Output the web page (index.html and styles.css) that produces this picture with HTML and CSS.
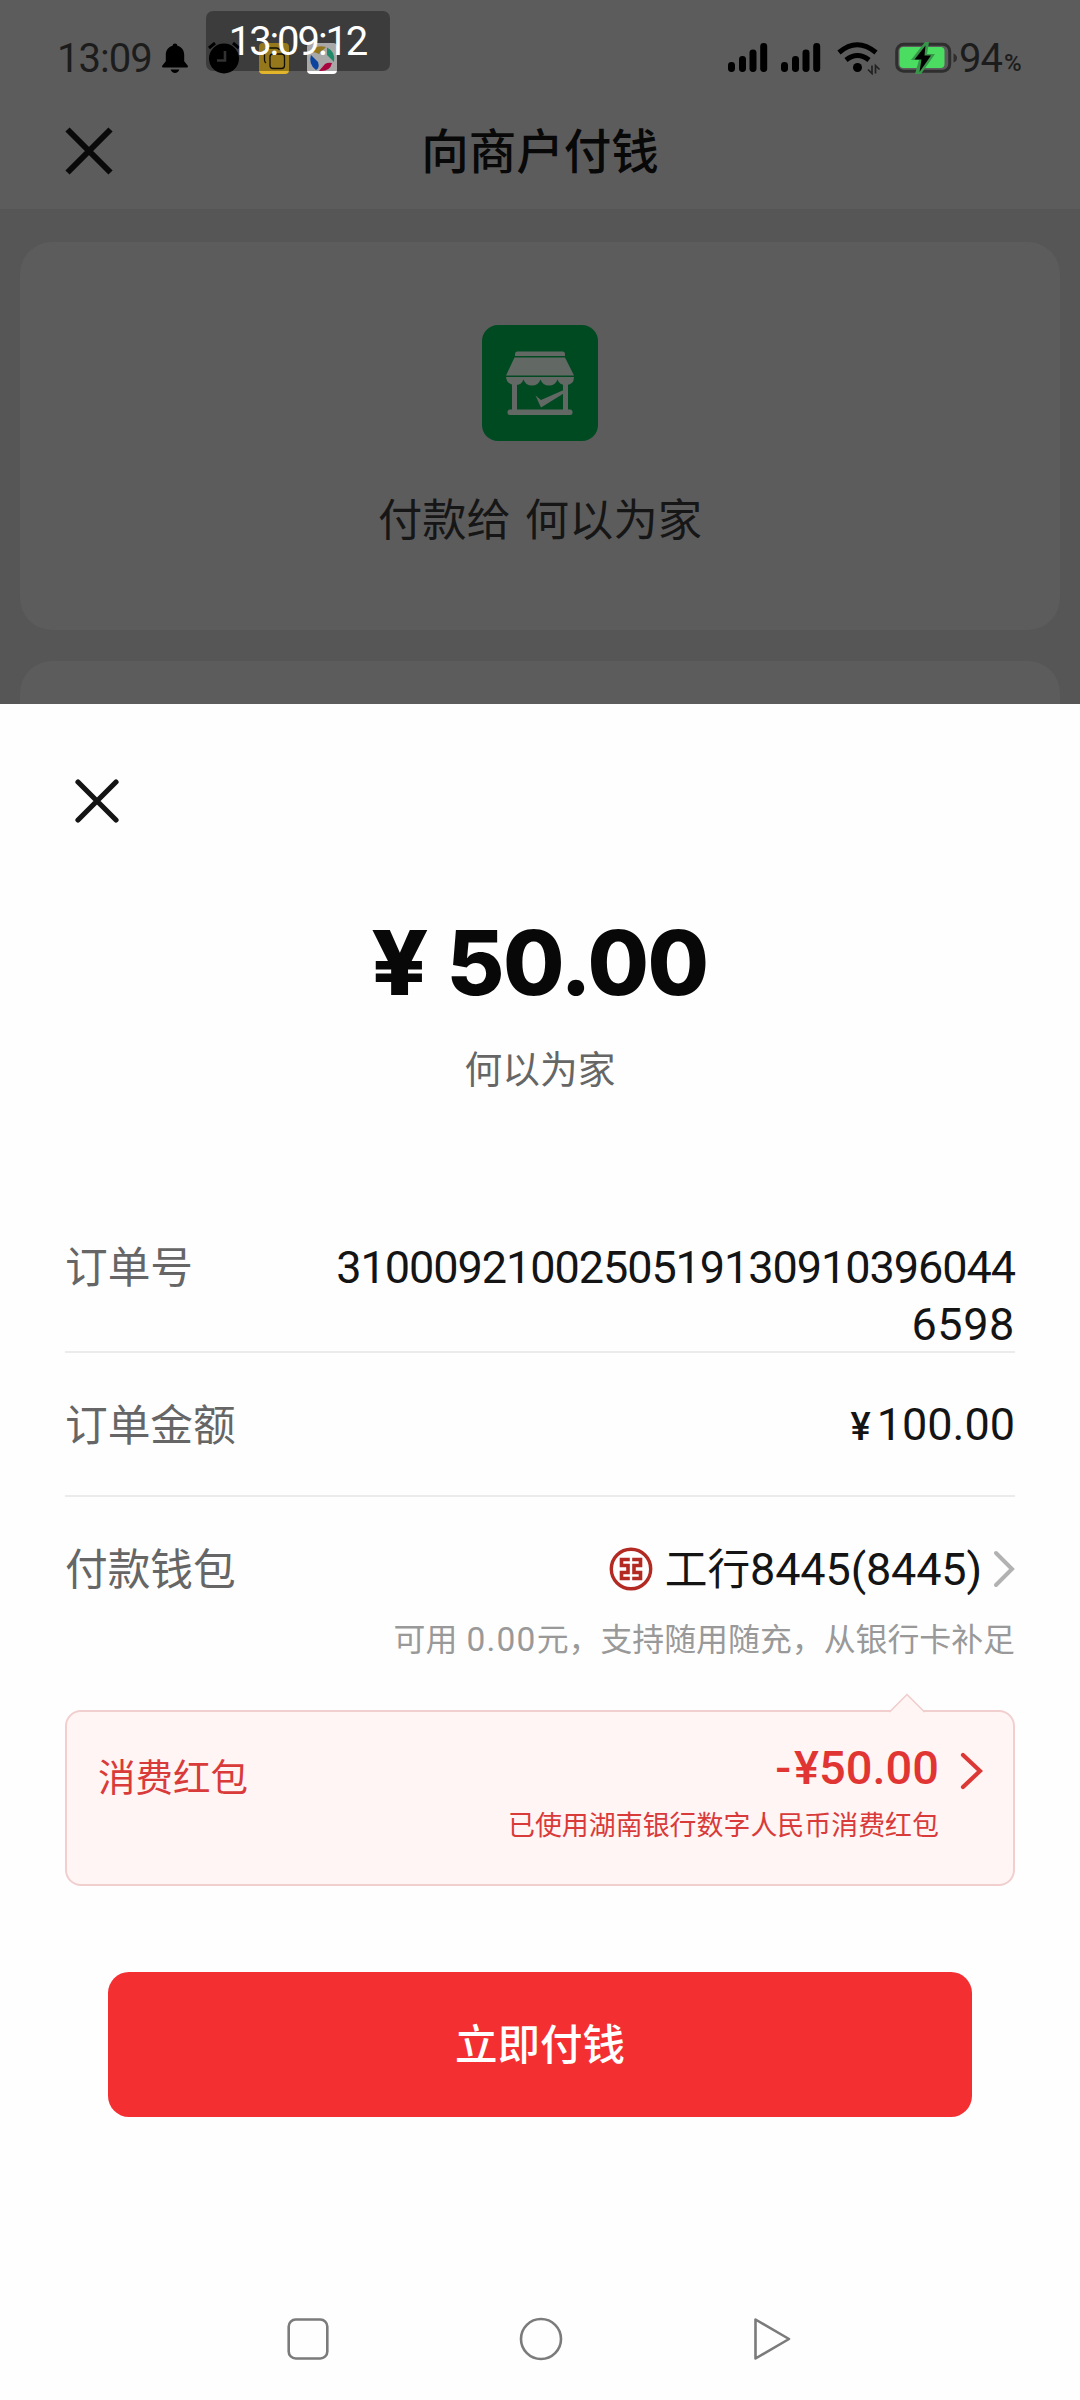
FILE: index.html
```html
<!DOCTYPE html>
<html lang="zh-CN">
<head>
<meta charset="utf-8">
<title>向商户付钱</title>
<link rel="stylesheet" href="styles.css">
</head>
<body>
<div class="screen">
  <div class="page">
    <div class="status">
      <span class="time">13:09</span>
      <svg class="bell" width="28" height="32" viewBox="0 0 28 32"><path d="M14 1.500c1.400 0 2.200.8 2.400 2.200 4.300 1 6.800 4.600 6.800 9.200v6.300l3.600 4.600c.4.600.2 1.600-.8 1.600H2c-1 0-1.200-1-.8-1.600l3.600-4.600v-6.300c0-4.600 2.500-8.200 6.800-9.200.2-1.400 1-2.200 2.400-2.200zM9.700 27.500h8.600c-.6 2.200-2.300 3.500-4.300 3.500s-3.700-1.300-4.300-3.500z"/></svg>
      <svg class="alarm" width="32" height="32" viewBox="0 0 32 32"><circle cx="16" cy="16.500" r="15"/><path d="M1 6l6-5M31 6l-6-5" stroke="#000" stroke-width="3"/><path d="M17 9v9.500H9" fill="none" stroke="#4c4c4c" stroke-width="2.600"/></svg>
      <svg class="app-a" width="30" height="31" viewBox="0 0 30 31"><rect width="30" height="31" rx="4" fill="#e3b52b"/><path d="M7 20q-1.500-1-1.500-3V9q0-4 4-4h8q2 0 3 2" fill="none" stroke="#1a1708" stroke-width="1.300"/><rect x="11" y="11" width="14.500" height="14.500" rx="3" fill="none" stroke="#1a1708" stroke-width="1.300"/></svg>
      <svg class="app-b" width="30" height="31" viewBox="0 0 30 31"><rect width="30" height="31" rx="4" fill="#fff"/><path d="M5 9Q9 1 19 4L12 11Q8 9 5 9z" fill="#e0b530"/><path d="M20 4.500Q29 9 27 19L20 12z" fill="#2fd0a0"/><path d="M25 20Q23 29 12 28L18 21Q21 19 25 20z" fill="#ff0860"/><path d="M4 12Q1 21 9 27Q13 25 11 19z" fill="#1068f0"/></svg>
      <span class="grow"></span>
      <svg class="signal" width="40" height="30" viewBox="0 0 40 30"><rect y="19" width="7" height="10" rx="3.400"/><rect x="11" y="13" width="7" height="16" rx="3.400"/><rect x="21.500" y="6.500" width="7" height="22.500" rx="3.400"/><rect x="32.200" width="7" height="29" rx="3.400"/></svg>
      <svg class="signal second" width="40" height="30" viewBox="0 0 40 30"><rect y="19" width="7" height="10" rx="3.400"/><rect x="11" y="13" width="7" height="16" rx="3.400"/><rect x="21.500" y="6.500" width="7" height="22.500" rx="3.400"/><rect x="32.200" width="7" height="29" rx="3.400"/></svg>
      <svg class="wifi" width="44" height="33" viewBox="0 0 44 33"><path d="M2 10.500Q20 -5 39 10.500M9 18Q20.500 9 32 18" fill="none" stroke="#000" stroke-width="5"/><circle cx="20.500" cy="25.500" r="4.500"/><path d="M35 23.500v8l-4-4M38.500 31.500v-8l4 4" fill="none" stroke="#222" stroke-width="1.700"/></svg>
      <svg class="battery" width="64" height="32" viewBox="0 0 64 32"><rect x="1.700" y="2.200" width="53" height="27" rx="7" fill="none" stroke="#2e2e2e" stroke-width="3"/><rect x="4.500" y="5" width="45" height="21" rx="4" fill="#4bdc62"/><path d="M58.500 11.500q3.500 1.500 3.500 4.500t-3.500 4.500z" fill="#2e2e2e"/><path d="M30 0L34 0L32 12H40L26 32L20 32L24 18H16z" fill="#37964a"/><path d="M30.500 3.500L19.500 17.500H26.500L24.500 30L36 13.500H29.500z"/></svg>
      <span class="level">94</span><span class="percent">%</span>
      <div class="clock">13:09:12</div>
    </div>
    <div class="titlebar">
      <svg width="48" height="48" viewBox="0 0 48 48"><path d="M2.500 2.500l43 43M45.500 2.500l-43 43" stroke="#090909" stroke-width="6"/></svg>
      <h1>向商户付钱</h1>
      <span class="pad"></span>
    </div>
    <div class="cards">
      <div class="card payee">
        <svg width="116" height="116" viewBox="0 0 116 116"><rect width="116" height="116" rx="16" fill="#004a22"/><g fill="#626864"><path d="M35 26.500h46q2 0 2 2.500v2H33v-2q0-2.500 2-2.500zM32.500 32.500h50.500L92 50.500H24zM24 52h68q0 8-8.500 8-6 0-8-5.500-2 6-8.500 6t-8.500-6q-2 6-8.500 6t-8.500-6q-2 5.500-8 5.500-8.500 0-9.500-8z"/><path d="M30 57h5v28h-5zM81 57h5v28h-5z"/><rect x="25.500" y="84.500" width="65" height="5.500" rx="2.500"/><path d="M53.500 70.500l5.500 4.500L84 64v3L59 82.500z"/></g></svg>
        <div class="payee-name">付款给 何以为家</div>
      </div>
      <div class="card next"></div>
    </div>
  </div>

  <div class="sheet">
    <svg class="close" width="44" height="44" viewBox="0 0 44 44"><path d="M3 3l38 38M41 3L3 41" stroke="#141414" stroke-width="5.200" stroke-linecap="round"/></svg>
    <div class="amount"><span class="currency">¥</span><span>50.00</span></div>
    <div class="shop">何以为家</div>

    <div class="row order">
      <span class="label">订单号</span>
      <span class="value number"><span>3100092100250519130910396044</span><span class="wrapped">6598</span></span>
    </div>
    <div class="row total">
      <span class="label">订单金额</span>
      <span class="value"><span class="yen">¥</span>100.00</span>
    </div>
    <div class="row wallet">
      <span class="label">付款钱包</span>
      <span class="value bank">
        <svg width="44" height="44" viewBox="0 0 44 44" fill="none" stroke="#b32a22"><circle cx="22" cy="22" r="19.700" stroke-width="3.400"/><path d="M20.800 12.500H12.500V18.500H19V25.500H12.500V31.500H20.800M23.200 12.500H31.500V18.500H25V25.500H31.500V31.500H23.200" stroke-width="3.600"/></svg>
        <span class="bank-name">工行<span class="digits">8445(8445)</span></span>
        <svg class="chev" width="22" height="38" viewBox="0 0 22 38"><path d="M3 3L19 19L3 35" fill="none" stroke="#b2b2b2" stroke-width="4" stroke-linecap="round"/></svg>
      </span>
    </div>
    <div class="hint">可用 <span class="hint-num">0.00</span>元，支持随用随充，从银行卡补足</div>

    <div class="coupon">
      <svg class="tip" width="36" height="20" viewBox="0 0 36 20"><path d="M1 18.500L18 1.500L35 18.500V20H1z" fill="#fff5f4"/><path d="M0 18.500H1L18 1.500L35 18.500H36" fill="none" stroke="#f1cccc" stroke-width="1.500"/></svg>
      <span class="coupon-label">消费红包</span>
      <span class="coupon-info">
        <span class="off"><span class="minus">-</span>¥50.00</span>
        <span class="used">已使用湖南银行数字人民币消费红包</span>
      </span>
      <svg class="coupon-chev" width="23" height="38" viewBox="0 0 23 38"><path d="M3 3L20 19L3 35" fill="none" stroke="#dc3836" stroke-width="4.200" stroke-linecap="round"/></svg>
    </div>

    <button class="pay">立即付钱</button>

    <div class="nav">
      <svg width="44" height="44" viewBox="0 0 44 44"><rect x="2.700" y="2.500" width="38.600" height="39" rx="7" /></svg>
      <svg width="44" height="44" viewBox="0 0 44 44"><circle cx="22" cy="22" r="20"/></svg>
      <svg width="44" height="44" viewBox="0 0 44 44"><path d="M4.500 2.500V41.500L38 22z" stroke-linejoin="round"/></svg>
    </div>
  </div>
</div>
</body>
</html>
```
FILE: styles.css
```css
* { box-sizing: border-box; }
body { margin: 0; background: #fefefe; font-family: "Noto Sans CJK SC", sans-serif; }
svg { display: block; flex: none; }
.screen { width: 1080px; height: 2400px; display: flex; flex-direction: column; overflow: hidden; }

/* dimmed page behind the sheet */
.page { flex: none; height: 704px; background: #565656; display: flex; flex-direction: column; overflow: hidden; }
.status { flex: none; position: relative; height: 116px; padding-left: 57px; padding-right: 57px; background: #5c5c5c; display: flex; align-items: center; font-family: Roboto, sans-serif; color: #1c1c1c; white-space: nowrap; }
.time { width: 104px; font-size: 40px; letter-spacing: -1px; }
.bell { margin-right: 19px; }
.alarm { margin-right: 19px; }
.app-a { margin-right: 18px; }
.grow { flex: 1; }
.second { margin-left: 13px; }
.wifi { margin-left: 16px; }
.battery { margin-left: 14px; }
.level { width: 45px; font-size: 40px; letter-spacing: -1px; }
.percent { width: 19px; padding-top: 10px; font-size: 24px; font-weight: 500; }
.clock { position: absolute; left: 206px; top: 11px; width: 184px; height: 60px; padding-right: 1px; border-radius: 7px; background: rgba(0, 0, 0, 0.34); color: #fff; font-size: 40px; letter-spacing: -2.100px; line-height: 62px; text-align: center; }
.titlebar { flex: none; height: 93px; padding: 0 65px 23px; background: #5c5c5c; display: flex; align-items: center; justify-content: space-between; }
.titlebar h1 { margin: 0; padding-bottom: 4px; font-size: 47.500px; line-height: 66px; font-weight: 500; color: #080808; }
.pad { width: 48px; }
.cards { flex: none; padding: 33px 20px 0; display: flex; flex-direction: column; gap: 31px; }
.card { background: #5c5c5c; border-radius: 32px; }
.payee { height: 388px; padding-top: 83px; display: flex; flex-direction: column; align-items: center; }
.payee-name { margin-top: 44px; font-size: 44.300px; line-height: 64px; word-spacing: 4px; color: #161616; }
.next { height: 80px; }

/* payment sheet */
.sheet { flex: 1; background: #fefefe; padding: 75px 65px 0; display: flex; flex-direction: column; }
.close { margin-left: 10px; }
.amount { height: 110px; margin-top: 85px; padding-left: 2px; display: flex; justify-content: center; align-items: center; gap: 22px; font-family: Inter, sans-serif; font-weight: 800; font-size: 89px; line-height: 110px; letter-spacing: -1.500px; color: #080808; }
.currency { transform: scaleX(1.12); }
.shop { height: 56px; margin-top: 21px; text-align: center; font-size: 37.700px; line-height: 56px; color: #666; }
.row { display: flex; justify-content: space-between; }
.label { font-size: 42.700px; line-height: 60px; padding-bottom: 4px; color: #666; }
.value { font-family: Roboto, sans-serif; font-size: 45px; color: #141414; white-space: nowrap; }
.order { height: 127px; margin-top: 131px; border-bottom: 2px solid #ebebeb; }
.order .label { padding-top: 8px; }
.number { padding-top: 13px; display: flex; flex-direction: column; align-items: flex-end; line-height: 57px; letter-spacing: -1.050px; }
.wrapped { letter-spacing: 0.600px; }
.total { height: 144px; border-bottom: 2px solid #ebebeb; align-items: center; }
.yen { font-size: 38px; font-weight: 500; margin-right: 6px; }
.wallet { height: 144px; align-items: center; }
.wallet .label { padding-bottom: 6px; }
.bank { display: flex; align-items: center; font-size: 45px; }
.bank-name { margin-left: 12px; margin-right: 11px; padding-bottom: 2px; font-family: "Noto Sans CJK SC", sans-serif; font-size: 42.700px; line-height: 60px; }
.digits { font-family: Roboto, sans-serif; font-size: 45px; letter-spacing: -0.150px; }
.hint { text-align: right; margin-top: -27px; font-size: 31.900px; line-height: 46px; color: #999; white-space: nowrap; word-spacing: 2px; }
.hint-num { font-family: Roboto, sans-serif; font-size: 33.500px; letter-spacing: 1.200px; }
.coupon { position: relative; height: 176px; margin-top: 47px; padding: 0 30px 0 31px; display: flex; border: 2px solid #f1cfcf; border-radius: 16px; background: #fff5f4; color: #d93a3a; }
.tip { position: absolute; left: 822px; top: -19px; }
.coupon-label { flex: 1; padding-top: 35px; font-size: 37.500px; line-height: 56px; }
.coupon-info { display: flex; flex-direction: column; align-items: flex-end; padding-top: 29px; margin-right: 21px; }
.off { font-family: Roboto, sans-serif; font-weight: 500; font-size: 47px; line-height: 54px; color: #e03533; }
.minus { margin-right: 3px; }
.used { margin-top: 9px; font-size: 26.950px; line-height: 40px; }
.coupon-chev { margin-top: 40px; }
.pay { width: 864px; height: 145px; margin: 86px auto 0; padding: 0 0 6px; border: 0; border-radius: 21px; background: #f42f32; color: #fff; font-family: inherit; font-size: 42.500px; font-weight: 500; }
.nav { display: flex; justify-content: space-between; margin-top: 200px; padding: 0 220px 0 221px; }
.nav svg { fill: none; stroke: #7b7b7b; stroke-width: 2.600; }
```
